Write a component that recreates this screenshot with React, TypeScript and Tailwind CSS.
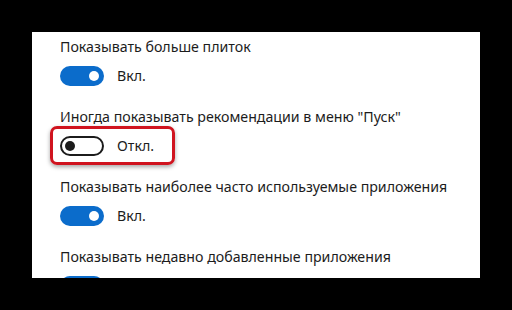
import React from 'react';

type Setting = {
  label: string;
  on: boolean;
  highlight?: boolean;
};

const settings: Setting[] = [
  { label: 'Показывать больше плиток', on: true },
  { label: 'Иногда показывать рекомендации в меню "Пуск"', on: false, highlight: true },
  { label: 'Показывать наиболее часто используемые приложения', on: true },
  { label: 'Показывать недавно добавленные приложения', on: true },
];

const Toggle: React.FC<{ on: boolean }> = ({ on }) =>
  on ? (
    <div className="flex h-[20px] w-[44px] items-center justify-end rounded-full bg-[#0b6ccb] pr-[5px]">
      <div className="h-[10px] w-[10px] rounded-full bg-white" />
    </div>
  ) : (
    <div className="flex h-[20px] w-[44px] items-center rounded-full border-2 border-[#1c1c1c] pl-[3px]">
      <div className="h-[10px] w-[10px] rounded-full bg-[#1c1c1c]" />
    </div>
  );

const SettingRow: React.FC<{ item: Setting }> = ({ item }) => {
  const state = (
    <div className="flex items-center gap-[13px]">
      <Toggle on={item.on} />
      <span className="text-[14.2px] leading-[20px]">{item.on ? 'Вкл.' : 'Откл.'}</span>
    </div>
  );

  return (
    <div className="flex flex-col items-start gap-[9px]">
      <span className="text-[14.2px] leading-[20px]">{item.label}</span>
      {item.highlight ? (
        <div className="-mx-[10px] -mt-[10px] -mb-[9px] rounded-[7px] border-[3px] border-[#d0141f] pt-[7px] pb-[6px] pl-[7px] pr-[18px] shadow-[0_2px_4px_rgba(0,0,0,0.35)]">
          {state}
        </div>
      ) : (
        state
      )}
    </div>
  );
};

const App: React.FC = () => {
  return (
    <div
      className="h-[310px] w-[512px] overflow-hidden bg-black pt-[32px] pl-[32px]"
      style={{ fontFamily: '"Noto Sans", "Open Sans", sans-serif' }}
    >
      <div className="flex h-[246px] w-[448px] flex-col gap-[21px] overflow-hidden bg-white pt-[5px] pl-[28px] text-[#1c1c1c]">
        {settings.map((item) => (
          <SettingRow key={item.label} item={item} />
        ))}
      </div>
    </div>
  );
};

export default App;
